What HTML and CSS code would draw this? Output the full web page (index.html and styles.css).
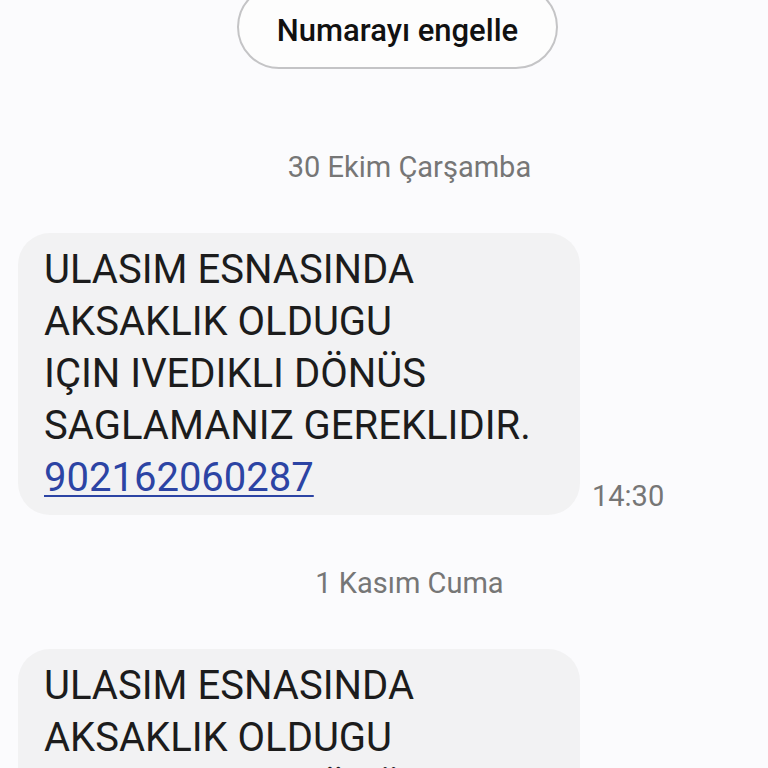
FILE: index.html
```html
<!DOCTYPE html>
<html lang="tr">
<head>
  <meta charset="UTF-8" />
  <meta name="viewport" content="width=device-width, initial-scale=1" />
  <title>Mesajlar</title>
  <link rel="stylesheet" href="styles.css">
</head>
<body>

  <div class="top">
    <button class="block-btn">Numarayı engelle</button>
  </div>

  <div class="day">30 Ekim Çarşamba</div>

  <div class="msg-row">
    <div class="bubble">
      ULASIM ESNASINDA<br>
      AKSAKLIK OLDUGU<br>
      IÇIN IVEDIKLI DÖNÜS<br>
      SAGLAMANIZ GEREKLIDIR.<br>
      <a href="#" class="phone">902162060287</a>
    </div>
    <span class="time">14:30</span>
  </div>

  <div class="day">1 Kasım Cuma</div>

  <div class="msg-row">
    <div class="bubble">
      ULASIM ESNASINDA<br>
      AKSAKLIK OLDUGU<br>
      IÇIN IVEDIKLI DÖNÜS<br>
      SAGLAMANIZ GEREKLIDIR.<br>
      <a href="#" class="phone">902162060287</a>
    </div>
    <span class="time">14:30</span>
  </div>

</body>
</html>
```

FILE: styles.css
```css
body {
  margin: 0;
  background: #fbfbfd;
  font-family: Roboto, "Noto Sans", sans-serif;
  color: #1c1c1c;
  height: 768px;
  overflow: hidden;
}
.top {
  display: flex;
  justify-content: center;
  padding-left: 27px;
  margin-bottom: 30px;
}
.block-btn {
  margin-top: -15px;
  width: 321px;
  height: 84px;
  border: 2px solid #c4c4c6;
  border-radius: 42px;
  background: #fdfdfd;
  font-family: inherit;
  font-size: 31px;
  font-weight: 500;
  color: #111;
  padding: 6px 0 0 0;
}
.day {
  padding: 52px 0 50px 51px;
  text-align: center;
  font-size: 29px;
  line-height: 32px;
  color: #767676;
}
.msg-row {
  display: flex;
  align-items: flex-end;
  padding-left: 18px;
}
.bubble {
  box-sizing: border-box;
  width: 562px;
  padding: 11px 26px 11px 26px;
  background: #f2f2f3;
  border-radius: 32px;
  font-size: 40px;
  line-height: 52px;
}
.phone {
  color: #2c44a4;
  text-decoration: underline;
  text-decoration-thickness: 2px;
  text-underline-offset: 4px;
}
.time {
  margin: 0 0 2px 12px;
  font-size: 29px;
  color: #767676;
}
```
